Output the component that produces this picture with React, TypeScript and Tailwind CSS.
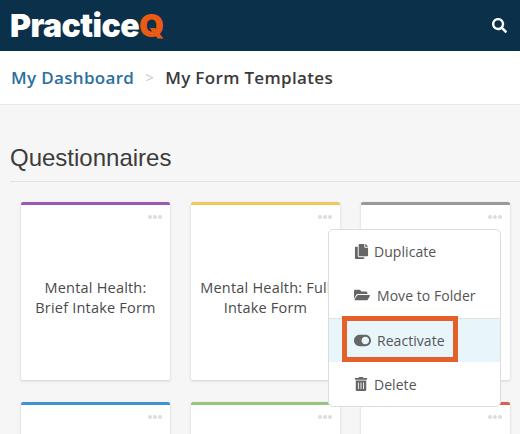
import React from "react";
import { FaCopy, FaFolderOpen, FaSearch, FaToggleOn, FaTrashAlt } from "react-icons/fa";

const cards = [
  { bar: "bg-[#9b59b6]", title: "Mental Health: Brief Intake Form" },
  { bar: "bg-[#f0c95c]", title: "Mental Health: Full Intake Form" },
  { bar: "bg-[#999999]", title: "" },
  { bar: "bg-[#3f94d0]", title: "" },
  { bar: "bg-[#94c67f]", title: "" },
  { bar: "bg-[#d9604f]", title: "" },
];

function Card({ bar, title }: { bar: string; title: string }) {
  return (
    <div className="relative flex h-[178px] flex-col rounded-[2px] bg-white shadow-[0_1px_3px_rgba(0,0,0,0.16)]">
      <div className={`h-[3px] rounded-t-[2px] ${bar}`} />
      <div className="flex justify-end gap-[1px] pt-[10px] pr-[8px]">
        <span className="h-[4px] w-[4px] rounded-full bg-[#dcdcdc]" />
        <span className="h-[4px] w-[4px] rounded-full bg-[#dcdcdc]" />
        <span className="h-[4px] w-[4px] rounded-full bg-[#dcdcdc]" />
      </div>
      <div className="flex flex-1 items-center justify-center pb-[4px] text-center text-[14.5px] leading-[20px] tracking-[0.2px] text-[#4a4a4a]">
        <span className="w-[135px]">{title}</span>
      </div>
    </div>
  );
}

function MenuItem({ icon, label, gap, extra }: { icon: React.ReactNode; label: string; gap: string; extra?: string }) {
  return (
    <div className={`flex h-[44px] items-center pl-[25px] text-[14px] tracking-[0.05px] text-[#555555] ${gap} ${extra ?? ""}`}>
      <span className="flex items-center text-[#666666]">{icon}</span>
      {label}
    </div>
  );
}

export default function App() {
  return (
    <div className="relative h-[434px] w-[520px] overflow-hidden bg-[#f6f6f6] font-['Open_Sans',sans-serif]">
      <header className="flex h-[51px] items-center justify-between bg-[#0b3049] pr-[13px] pl-[10px]">
        <div className="font-['Inter',sans-serif] text-[32px] leading-none font-black tracking-[-0.55px] text-white">
          Practice<span className="text-[#ea5a14]">Q</span>
        </div>
        <FaSearch className="text-white" size={15} />
      </header>
      <nav className="flex h-[54px] items-center border-b border-[#e8e8e8] bg-white pl-[11px] text-[17px] font-semibold tracking-[0.33px]">
        <span className="text-[#2a6f9e]">My Dashboard</span>
        <span className="mx-[11px] text-[15px] font-normal text-[#c8c8c8]">&gt;</span>
        <span className="text-[#3a3a3a]">My Form Templates</span>
      </nav>
      <main className="pl-[10px]">
        <h1 className="mt-[38px] font-['Liberation_Sans',sans-serif] text-[24px] leading-[30px] text-[#3c3c3c]">Questionnaires</h1>
        <hr className="mt-[8px] border-[#e2e2e2]" />
        <div className="mt-[20px] grid grid-cols-[repeat(3,149px)] gap-x-[21px] gap-y-[22px] pl-[11px]">
          {cards.map((card, i) => (
            <Card key={i} {...card} />
          ))}
        </div>
      </main>
      <div className="absolute top-[229px] left-[328px] flex w-[173px] flex-col overflow-hidden rounded-[5px] border border-[#dddddd] bg-white">
        <MenuItem icon={<FaCopy size={15} />} label="Duplicate" gap="gap-[5px]" extra="pb-[2px]" />
        <MenuItem icon={<FaFolderOpen size={16} />} label="Move to Folder" gap="gap-[7px]" extra="pb-[2px]" />
        <MenuItem icon={<FaToggleOn size={17} />} label="Reactivate" gap="gap-[6px]" extra="border-t border-[#e2e2e2] bg-[#e8f6fc]" />
        <MenuItem icon={<FaTrashAlt size={14} />} label="Delete" gap="gap-[6px]" />
      </div>
      <div className="absolute top-[316px] left-[342px] h-[46px] w-[116px] border-[5px] border-[#e4602a]" />
    </div>
  );
}
